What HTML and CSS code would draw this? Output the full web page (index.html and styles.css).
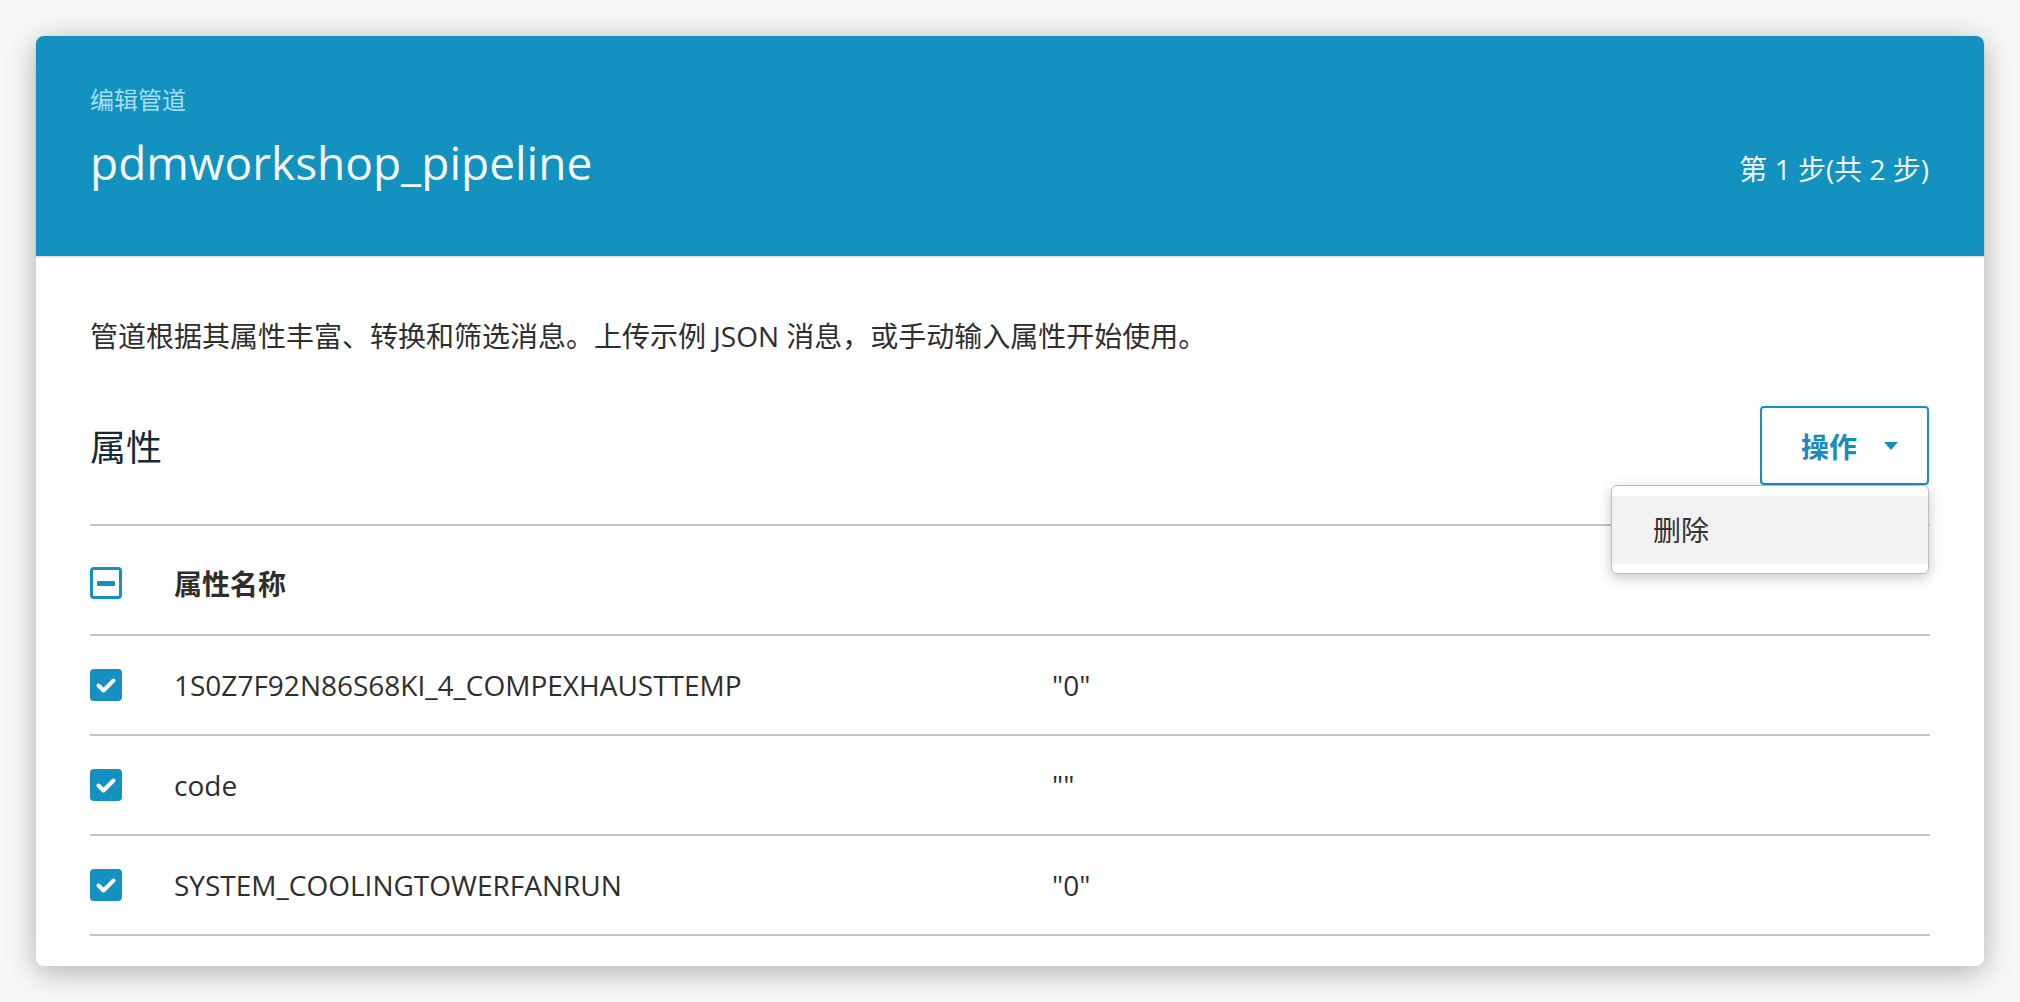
FILE: index.html
```html
<!DOCTYPE html>
<html lang="zh-CN">
<head>
<meta charset="utf-8">
<title>编辑管道</title>
<link rel="stylesheet" href="styles.css">
</head>
<body>
<div class="modal">
  <header class="modal-header">
    <div class="subtitle">编辑管道</div>
    <div class="title-row">
      <h1 class="title">pdmworkshop_pipeline</h1>
      <span class="step">第 1 步(共 2 步)</span>
    </div>
  </header>
  <section class="modal-body">
    <p class="intro">管道根据其属性丰富、转换和筛选消息。上传示例 JSON 消息，或手动输入属性开始使用。</p>
    <div class="section-head">
      <h2 class="section-title">属性</h2>
      <div class="actions">
        <button class="btn-actions" type="button">
          <span class="btn-label">操作</span>
          <svg class="caret" width="14" height="8" viewBox="0 0 14 8"><path d="M0 0 H14 L7 8 Z" fill="currentColor"/></svg>
        </button>
        <div class="menu">
          <div class="menu-item">删除</div>
        </div>
      </div>
    </div>
    <div class="table">
      <div class="row row-head">
        <div class="cell-check">
          <span class="cb cb-indeterminate"><span class="bar"></span></span>
        </div>
        <div class="cell-name">属性名称</div>
        <div class="cell-value"></div>
      </div>
      <div class="row">
        <div class="cell-check">
          <span class="cb cb-checked"><svg width="32" height="32" viewBox="0 0 32 32"><path d="M8.5 16.5 L13.5 21.5 L23.5 11.5" fill="none" stroke="#fff" stroke-width="4" stroke-linecap="round" stroke-linejoin="round"/></svg></span>
        </div>
        <div class="cell-name">1S0Z7F92N86S68KI_4_COMPEXHAUSTTEMP</div>
        <div class="cell-value">"0"</div>
      </div>
      <div class="row">
        <div class="cell-check">
          <span class="cb cb-checked"><svg width="32" height="32" viewBox="0 0 32 32"><path d="M8.5 16.5 L13.5 21.5 L23.5 11.5" fill="none" stroke="#fff" stroke-width="4" stroke-linecap="round" stroke-linejoin="round"/></svg></span>
        </div>
        <div class="cell-name">code</div>
        <div class="cell-value">""</div>
      </div>
      <div class="row">
        <div class="cell-check">
          <span class="cb cb-checked"><svg width="32" height="32" viewBox="0 0 32 32"><path d="M8.5 16.5 L13.5 21.5 L23.5 11.5" fill="none" stroke="#fff" stroke-width="4" stroke-linecap="round" stroke-linejoin="round"/></svg></span>
        </div>
        <div class="cell-name">SYSTEM_COOLINGTOWERFANRUN</div>
        <div class="cell-value">"0"</div>
      </div>
    </div>
  </section>
</div>
</body>
</html>
```

FILE: styles.css
```css
* { box-sizing: border-box; }

html, body {
  margin: 0;
  padding: 0;
}

body {
  background: #f8f8f8;
  font-family: "Open Sans", "Noto Sans CJK SC", sans-serif;
  color: #333;
  padding: 36px;
}

.modal {
  width: 1948px;
  background: #fff;
  border-radius: 8px;
  box-shadow: 0 6px 30px rgba(0, 0, 0, 0.3);
}

.modal-header {
  height: 220px;
  background: #1391bf;
  border-radius: 8px 8px 0 0;
  padding: 48px 54px 0;
  box-shadow: 0 1px 2px rgba(0, 0, 0, 0.18);
  position: relative;
}

.subtitle {
  font-size: 24px;
  line-height: 32px;
  color: #a3def2;
}

.title-row {
  display: flex;
  justify-content: space-between;
  align-items: baseline;
  margin-top: 18px;
}

.title {
  margin: 0;
  font-size: 46px;
  line-height: 56px;
  font-weight: 400;
  color: #f4f6f7;
}

.step {
  font-size: 28px;
  color: #eef5f8;
  margin-right: 1px;
}

.modal-body {
  padding: 60px 54px 30px;
}

.intro {
  margin: 0;
  font-size: 28px;
  line-height: 40px;
  color: #2e2e2e;
}

.section-head {
  display: flex;
  justify-content: space-between;
  align-items: center;
  margin-top: 50px;
  margin-bottom: 39px;
  height: 79px;
}

.section-title {
  margin: 0;
  font-size: 36px;
  font-weight: 400;
  color: #152935;
}

.actions {
  position: relative;
  margin-right: 1px;
}

.btn-actions {
  display: flex;
  align-items: center;
  gap: 27px;
  width: 169px;
  height: 79px;
  padding: 0 0 0 39px;
  background: #fff;
  border: 2px solid #1690c0;
  border-radius: 4px;
  font-family: inherit;
  font-size: 28px;
  font-weight: 700;
  color: #1a8bbb;
  white-space: nowrap;
}

.btn-label {
  flex: none;
}

.caret {
  color: #1a8bbb;
  flex: none;
}

.menu {
  position: absolute;
  top: 79px;
  right: 0;
  width: 318px;
  background: #fff;
  border: 1px solid #bdbdbd;
  border-radius: 6px;
  padding: 10px 0 9px;
  box-shadow: 0 4px 14px rgba(0, 0, 0, 0.22);
  z-index: 2;
}

.menu-item {
  height: 68px;
  background: #f2f2f2;
  padding-left: 41px;
  font-size: 28px;
  line-height: 68px;
  color: #333;
}

.table {
  border-top: 2px solid #c6c6c6;
}

.row {
  display: grid;
  grid-template-columns: 84px 878px 1fr;
  align-items: center;
  height: 100px;
  border-bottom: 2px solid #c6c6c6;
  font-size: 28px;
  color: #2e2e2e;
}

.row-head {
  height: 110px;
  padding-top: 6px;
  font-weight: 700;
}

.cell-check {
  display: flex;
  align-items: center;
}

.cb {
  width: 32px;
  height: 32px;
  border-radius: 4px;
  display: flex;
  align-items: center;
  justify-content: center;
}

.cb-checked {
  background: #1591c1;
}

.cb-checked svg {
  display: block;
}

.cb-indeterminate {
  border: 3px solid #1591c1;
  background: #fff;
}

.bar {
  width: 18px;
  height: 5px;
  background: #1591c1;
  border-radius: 1px;
}
```
